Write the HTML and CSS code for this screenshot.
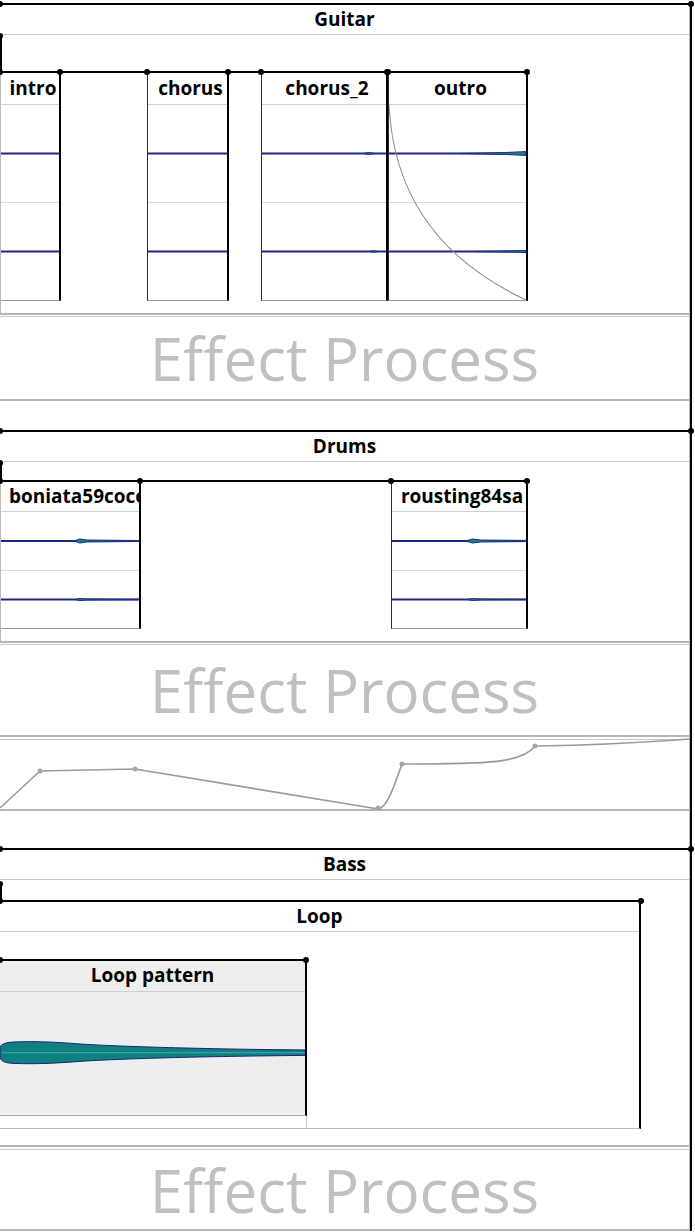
FILE: index.html
```html
<!DOCTYPE html>
<html lang="en">
<head>
<meta charset="utf-8">
<title>Tracks</title>
<link rel="stylesheet" href="styles.css">
</head>
<body>
<main class="page">

  <section class="track">
    <span class="dot dot-l"></span><span class="dot dot-r"></span>
    <div class="track-inner">
      <h2 class="title">Guitar</h2>
      <div class="lane">
        <div class="lane-head lh-guitar"><span class="dot"></span></div>
        <div class="clips">
          <div class="clip cut" style="width:60px">
            <div class="clip-title ct-guitar">intro</div>
            <div class="clip-body">
              <div class="ch ch-g"><svg class="wave" viewBox="0 0 100 100" preserveAspectRatio="none"><path class="wl" d="M0 50H100"/></svg></div>
              <div class="ch ch-g"><svg class="wave" viewBox="0 0 100 100" preserveAspectRatio="none"><path class="wl" d="M0 50H100"/></svg></div>
            </div>
          </div>
          <div class="clip" style="margin-left:86px;width:82px">
            <div class="clip-title ct-guitar">chorus</div>
            <div class="clip-body">
              <div class="ch ch-g"><svg class="wave" viewBox="0 0 100 100" preserveAspectRatio="none"><path class="wl" d="M0 50H100"/></svg></div>
              <div class="ch ch-g"><svg class="wave" viewBox="0 0 100 100" preserveAspectRatio="none"><path class="wl" d="M0 50H100"/></svg></div>
            </div>
          </div>
          <div class="clip" style="margin-left:32px;width:127px">
            <div class="clip-title ct-guitar">chorus_2</div>
            <div class="clip-body">
              <div class="ch ch-g"><svg class="wave" viewBox="0 0 100 100" preserveAspectRatio="none"><path class="wl" d="M0 50H100"/><path class="wb" d="M82 50L86 49L91 50L86 51Z"/></svg></div>
              <div class="ch ch-g"><svg class="wave" viewBox="0 0 100 100" preserveAspectRatio="none"><path class="wl" d="M0 50H100"/><path class="wb" d="M86 50L90 49.2L94 50L90 50.8Z"/></svg></div>
            </div>
          </div>
          <div class="clip" style="width:140px">
            <div class="clip-title ct-guitar">outro</div>
            <div class="clip-body">
              <div class="ch ch-g"><svg class="wave" viewBox="0 0 100 100" preserveAspectRatio="none"><path class="wl" d="M0 50H100"/><path class="wb" d="M50 50L85 49L100 48L100 52L85 51Z"/></svg></div>
              <div class="ch ch-g"><svg class="wave" viewBox="0 0 100 100" preserveAspectRatio="none"><path class="wl" d="M0 50H100"/><path class="wb" d="M60 50L90 49.3L100 49L100 51L90 50.7Z"/></svg></div>
              <svg class="fade" viewBox="0 0 137 196" preserveAspectRatio="none"><path d="M0 0C4 80 40 150 137 196"/></svg>
            </div>
          </div>
        </div>
      </div>
      <div class="fx fx-guitar">Effect Process</div>
      <div class="spacer sp-guitar"></div>
    </div>
  </section>

  <section class="track">
    <span class="dot dot-l"></span><span class="dot dot-r"></span>
    <div class="track-inner">
      <h2 class="title">Drums</h2>
      <div class="lane">
        <div class="lane-head lh-drums"><span class="dot"></span></div>
        <div class="clips">
          <div class="clip cut" style="width:140px">
            <div class="clip-title ct-drums">boniata59coco</div>
            <div class="clip-body">
              <div class="ch ch-d"><svg class="wave" viewBox="0 0 100 100" preserveAspectRatio="none"><path class="wl" d="M0 50H100"/><path class="wb" d="M53 50L57 46.5L62 48.3L100 49.2L100 50.8L62 51.7L57 53.5Z"/></svg></div>
              <div class="ch ch-d"><svg class="wave" viewBox="0 0 100 100" preserveAspectRatio="none"><path class="wl" d="M0 50H100"/><path class="wb" d="M54 50L57 48L62 49.2L100 49.6L100 50.4L62 50.8L57 52Z"/></svg></div>
            </div>
          </div>
          <div class="clip" style="margin-left:250px;width:137px">
            <div class="clip-title ct-drums">rousting84sa</div>
            <div class="clip-body">
              <div class="ch ch-d"><svg class="wave" viewBox="0 0 100 100" preserveAspectRatio="none"><path class="wl" d="M0 50H100"/><path class="wb" d="M55 50L60 46.5L66 48.3L100 49L100 51L66 51.7L60 53.5Z"/></svg></div>
              <div class="ch ch-d"><svg class="wave" viewBox="0 0 100 100" preserveAspectRatio="none"><path class="wl" d="M0 50H100"/><path class="wb" d="M56 50L60 48.3L66 49.3L100 49.7L100 50.3L66 50.7L60 51.7Z"/></svg></div>
            </div>
          </div>
        </div>
      </div>
      <div class="fx fx-drums">Effect Process</div>
      <div class="auto">
        <svg class="auto-svg" viewBox="0 739 688 72">
          <path class="curve" d="M0 808L40 771L135 769L378 809C388 808 396 780 402 764C490 764 522 763 535 746Q610 745 690 739"/>
          <circle cx="40" cy="771" r="2.5"/>
          <circle cx="135" cy="769" r="2.5"/>
          <circle cx="378" cy="808" r="2.5"/>
          <circle cx="402" cy="764" r="2.5"/>
          <circle cx="535" cy="746" r="2.5"/>
        </svg>
      </div>
      <div class="spacer sp-drums"></div>
    </div>
  </section>

  <section class="track">
    <span class="dot dot-l"></span><span class="dot dot-r"></span>
    <div class="track-inner">
      <h2 class="title">Bass</h2>
      <div class="lane lane-bass">
        <div class="lane-head lh-bass"><span class="dot"></span></div>
        <div class="loop">
          <span class="dot loop-dot-l"></span><span class="dot loop-dot-r"></span>
          <div class="clip-title ct-loop">Loop</div>
          <div class="loop-body">
            <div class="pattern">
              <span class="dot pat-dot-l"></span><span class="dot pat-dot-r"></span>
              <div class="clip-title ct-pattern">Loop pattern</div>
              <div class="pattern-wave">
                <svg class="blob" viewBox="0 0 305 123">
                  <path d="M0 57C0 52 5 50.5 14 50C30 49.3 50 49.5 80 52C120 54.5 200 57 305 58L305 63.4C200 64.4 120 66.7 80 69.4C50 71.8 30 72 14 71.4C5 71 0 69.5 0 64Z"/>
                  <path class="blob-mid" d="M2 60.7H305"/>
                </svg>
              </div>
            </div>
            <div class="pattern-tail"></div>
          </div>
        </div>
      </div>
      <div class="fx fx-bass">Effect Process</div>
    </div>
  </section>

</main>
</body>
</html>
```

FILE: styles.css
```css
* {
  box-sizing: border-box;
  margin: 0;
  padding: 0;
}

html,
body {
  background: #ffffff;
}

body {
  width: 695px;
  height: 1232px;
  overflow: hidden;
  font-family: "Open Sans", "DejaVu Sans", sans-serif;
  color: #000;
}

.page {
  width: 692px;
  padding-top: 3px;
}

.track {
  position: relative;
  border-top: 2px solid #000;
  border-right: 2px solid #000;
}

.track-inner {
  border-right: 1px solid #bdbdbd;
}

.dot {
  position: absolute;
  width: 6px;
  height: 6px;
  border-radius: 50%;
  background: #000;
}

.track > .dot-l {
  left: -3px;
  top: -4px;
}

.track > .dot-r {
  right: -4px;
  top: -4px;
}

.title {
  height: 30px;
  border-bottom: 1px solid #c8c8c8;
  text-align: center;
  font-size: 19px;
  font-weight: 700;
  line-height: 28px;
}

/* lanes */
.lane {
  border-bottom: 2px solid #b5b5b5;
}

.lane-head {
  position: relative;
  margin-top: 1px;
  border-left: 2px solid #000;
}

.lane-head .dot {
  left: -5px;
  top: -3px;
}

.lh-guitar {
  height: 35px;
}

.lh-drums {
  height: 17px;
}

.lh-bass {
  margin-top: 4px;
  height: 16px;
}

.clips {
  display: flex;
  width: max-content;
  border-top: 2px solid #000;
  border-left: 1px solid #bbbbbb;
  padding-bottom: 12px;
}

.clip {
  position: relative;
  flex: none;
  border-left: 1px solid #2e2e2e;
  border-right: 2px solid #000;
  border-bottom: 1px solid #9a9a9a;
}

.clip.cut {
  border-left: 0;
}

.clip::before,
.clip::after {
  content: "";
  position: absolute;
  top: -4px;
  width: 6px;
  height: 6px;
  border-radius: 50%;
  background: #000;
}

.clip::before {
  left: -4px;
}

.clip::after {
  right: -4px;
}

.clip-title {
  border-bottom: 1px solid #cfcfcf;
  text-align: center;
  font-size: 19px;
  font-weight: 700;
  white-space: nowrap;
  overflow: hidden;
  padding: 0 2px 0 8px;
}

.ct-guitar {
  height: 32px;
  line-height: 30px;
}

.ct-drums {
  height: 30px;
  line-height: 28px;
}

.clip-body {
  position: relative;
}

.ch-g {
  height: 97px;
}

.ch-g + .ch-g {
  height: 98px;
  border-top: 1px solid #dadada;
}

.ch-d {
  height: 58px;
}

.ch-d + .ch-d {
  border-top: 1px solid #dadada;
}

.wave {
  display: block;
  width: 100%;
  height: 100%;
}

.wl {
  fill: none;
  stroke: #1c2786;
  stroke-width: 1.8;
  vector-effect: non-scaling-stroke;
}

.wb {
  fill: #18808a;
  stroke: #1f2c8a;
  stroke-width: 1;
  vector-effect: non-scaling-stroke;
}

.fade {
  position: absolute;
  inset: 0;
  width: 100%;
  height: 100%;
}

.fade path {
  fill: none;
  stroke: #8a8a8a;
  stroke-width: 1;
  vector-effect: non-scaling-stroke;
}

/* effect boxes */
.fx {
  display: flex;
  align-items: center;
  justify-content: center;
  margin-top: 1px;
  border-top: 1px solid #c8c8c8;
  border-bottom: 2px solid #b5b5b5;
  font-size: 60px;
  font-weight: 400;
  color: #c0c0c0;
  line-height: 1;
  white-space: nowrap;
}

.fx-guitar {
  height: 85px;
}

.fx-drums {
  height: 93px;
}

.fx-bass {
  margin-top: 2px;
  height: 82px;
}

.spacer {
  display: block;
}

.sp-guitar {
  height: 29px;
}

.sp-drums {
  height: 37px;
}

/* automation */
.auto {
  position: relative;
  margin-top: 2px;
  height: 72px;
  border-top: 1px solid #c8c8c8;
  border-bottom: 2px solid #b5b5b5;
}

.auto-svg {
  position: absolute;
  left: 0;
  top: -1px;
  width: 688px;
  height: 72px;
  overflow: visible;
}

.curve {
  fill: none;
  stroke: #9a9a9a;
  stroke-width: 1.6;
}

.auto-svg circle {
  fill: #a6a6a6;
}

/* bass loop */
.lane-bass {
  padding-bottom: 16px;
}

.loop {
  position: relative;
  width: 641px;
  border-top: 2px solid #000;
  border-right: 2px solid #000;
  border-bottom: 1px solid #bbbbbb;
}

.loop-dot-l {
  left: -3px;
  top: -4px;
}

.loop-dot-r {
  right: -5px;
  top: -4px;
}

.ct-loop {
  height: 30px;
  line-height: 28px;
  padding: 0;
}

.loop-body {
  padding-top: 27px;
}

.pattern {
  position: relative;
  width: 307px;
  background: #eeeeee;
  border-top: 2px solid #000;
  border-right: 2px solid #000;
  border-bottom: 1px solid #a8a8a8;
}

.pat-dot-l {
  left: -3px;
  top: -4px;
}

.pat-dot-r {
  right: -4px;
  top: -4px;
}

.ct-pattern {
  height: 31px;
  line-height: 29px;
  padding: 0;
}

.pattern-wave {
  height: 123px;
}

.blob {
  display: block;
  width: 305px;
  height: 123px;
}

.blob path {
  fill: #0e8080;
  stroke: #1a237e;
  stroke-width: 1;
}

.blob .blob-mid {
  fill: none;
  stroke: #4aa6a6;
  stroke-width: 1;
}

.pattern-tail {
  width: 307px;
  height: 12px;
  border-right: 1px solid #c4c4c4;
}
```
